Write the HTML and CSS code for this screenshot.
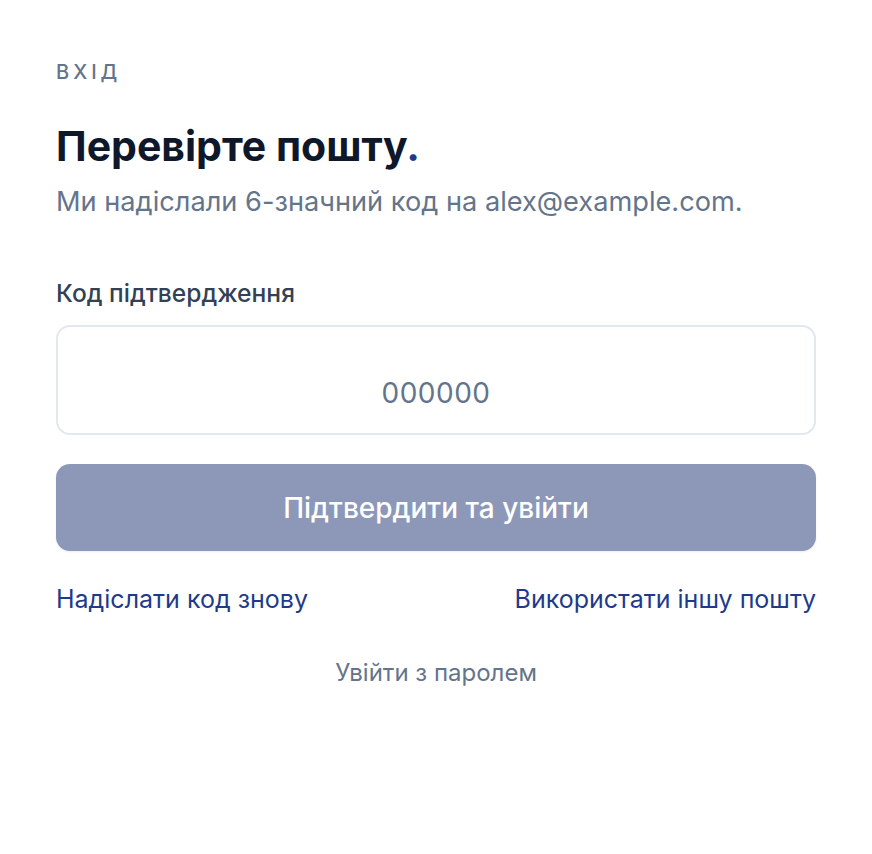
FILE: index.html
```html
<!DOCTYPE html>
<html lang="uk">
<head>
    <meta charset="UTF-8">
    <meta name="viewport" content="width=device-width, initial-scale=1.0">
    <title>Вхід</title>
    <link rel="stylesheet" href="styles.css">
</head>
<body>

<div class="container">
    <div class="eyebrow">Вхід</div>

    <h1>Перевірте пошту<span class="dot">.</span></h1>
    <p class="subtitle">Ми надіслали 6-значний код на alex@example.com.</p>

    <form id="verify-form" autocomplete="off">
        <label for="code">Код підтвердження</label>
        <input type="text" id="code" placeholder="000000" maxlength="6" inputmode="numeric">

        <button type="submit" class="btn-primary" disabled>Підтвердити та увійти</button>
    </form>

    <div class="links">
        <a href="#">Надіслати код знову</a>
        <a href="#">Використати іншу пошту</a>
    </div>

    <a href="#" class="password-link">Увійти з паролем</a>
</div>

</body>
</html>
```

FILE: styles.css
```css
* {
    margin: 0;
    padding: 0;
    box-sizing: border-box;
    font-family: Inter, "Noto Sans", sans-serif;
}

body {
    background-color: #fff;
}

.container {
    padding: 58px 56px;
    display: flex;
    flex-direction: column;
}

.eyebrow {
    text-transform: uppercase;
    font-size: 20px;
    letter-spacing: 4px;
    color: #64748b;
    font-weight: 500;
    line-height: 28px;
}

h1 {
    margin-top: 36px;
    font-size: 41px;
    font-weight: 700;
    color: #0f172a;
    line-height: 48px;
}

.dot {
    color: #1e3a8a;
}

.subtitle {
    margin-top: 14px;
    font-size: 27.2px;
    color: #64748b;
    line-height: 36px;
}

form {
    margin-top: 57px;
    display: flex;
    flex-direction: column;
}

label {
    font-size: 24.6px;
    font-weight: 500;
    color: #334155;
    line-height: 32px;
}

input[type="text"] {
    margin-top: 16px;
    height: 110px;
    border: 2px solid #e2e8f0;
    border-radius: 14px;
    text-align: center;
    font-size: 28px;
    letter-spacing: 0.5px;
    color: #0f172a;
    padding-top: 26px;
}

input::placeholder {
    color: #64748b;
}

input[type="text"]:focus {
    border-color: #1e3a8a;
    outline: none;
}

.btn-primary {
    margin-top: 29px;
    height: 87px;
    background-color: #8d98b9;
    color: #fff;
    border: none;
    border-radius: 14px;
    font-size: 28px;
    font-weight: 500;
    box-shadow: 0 1px 2px rgba(15, 23, 42, 0.08);
}

.links {
    margin-top: 32px;
    display: flex;
    justify-content: space-between;
}

.links a {
    font-size: 25px;
    color: #1e3a8a;
    text-decoration: none;
    line-height: 32px;
}

.password-link {
    margin-top: 42px;
    align-self: center;
    font-size: 24px;
    color: #64748b;
    text-decoration: none;
    line-height: 32px;
}
```
